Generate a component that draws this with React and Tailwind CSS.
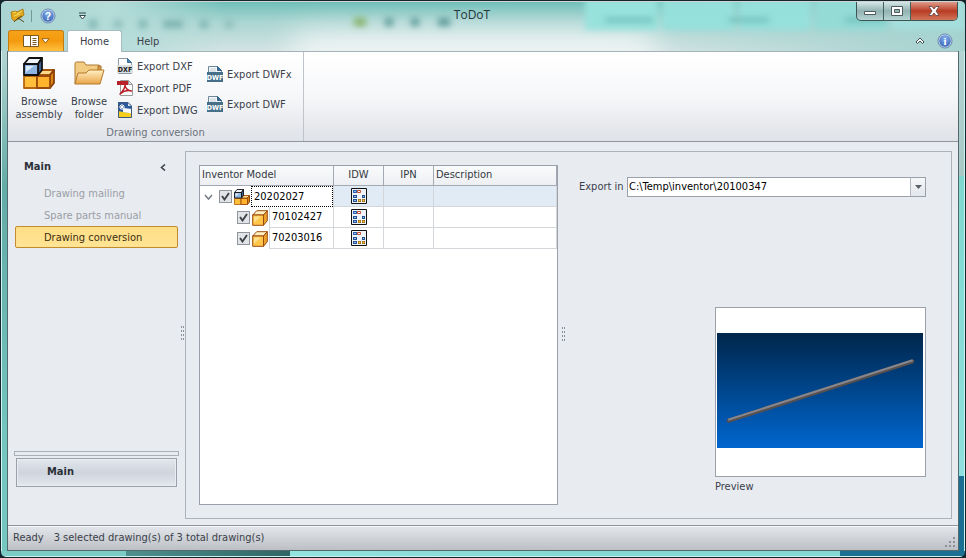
import React, { useState } from "react";

function Assembly({ className }) {
  return (
    <svg className={className} viewBox="0 0 32 32" aria-hidden="true">
      <g strokeLinejoin="round" strokeWidth="1.8">
        <path d="M14 18l4-5h13l-4 5z" fill="#ffd98a" stroke="#a8560c" />
        <path d="M27 18l4-5v13l-4 5z" fill="#d98512" stroke="#8a3d06" />
        <path d="M1 19h13v12H1z" fill="#ffbf3c" stroke="#b5650f" />
        <path d="M14 19h13v12H14z" fill="#ffb22c" stroke="#9a4a0a" />
        <path d="M1 7l5-6h13l-4 6z" fill="#eef3fa" stroke="#111" />
        <path d="M15 7l4-6v12l-4 5z" fill="#3c5f94" stroke="#111" />
        <path d="M1 7h14v11H1z" fill="#8fb6e2" stroke="#111" />
        <path d="M3 9h8l-8 6z" fill="#dcebfa" />
      </g>
    </svg>
  );
}

function Folder({ className }) {
  return (
    <svg className={className} viewBox="0 0 32 26" aria-hidden="true">
      <defs>
        <linearGradient id="folderFront" x1="0" y1="0" x2="0" y2="1">
          <stop offset="0" stopColor="#fff0c4" />
          <stop offset="1" stopColor="#e9a548" />
        </linearGradient>
      </defs>
      <path d="M2 24V3.500Q2 2 3.500 2H11l2 3h12.500Q27 5 27 6.500V14" fill="#f3cc83" stroke="#b07a34" />
      <path d="M25 6h3v6h-3z" fill="#d99c4c" stroke="#a96f2b" />
      <path d="M2 24L5 13h8l3-3h15l-4 14z" fill="url(#folderFront)" stroke="#b5792b" strokeLinejoin="round" />
    </svg>
  );
}

function DxfIcon() {
  return (
    <svg className="h-4 w-4 shrink-0" viewBox="0 0 16 16" aria-hidden="true">
      <path d="M1.500 .5h9l4 4v11h-13z" fill="#fdfdfd" stroke="#8c9aa8" />
      <path d="M10.500 .5l4 4h-4z" fill="#4c86bd" stroke="#3a6c9c" />
      <path d="M0 7h16v8H0z" fill="#dcdfe2" />
      <text x="8" y="14" textAnchor="middle" fontFamily="DejaVu Sans Condensed" fontSize="7" fontWeight="700" fill="#222">DXF</text>
    </svg>
  );
}

function DwfIcon() {
  return (
    <svg className="h-4 w-4 shrink-0" viewBox="0 0 16 16" aria-hidden="true">
      <path d="M1.500 .5h9l4 4v11h-13z" fill="#f4f7f9" stroke="#6c8798" />
      <path d="M10.500 .5l4 4h-4z" fill="#3d719b" stroke="#2f5f86" />
      <path d="M3 3h6M3 5h6" stroke="#c4d0d8" />
      <path d="M0 6h16v10H0z" fill="#466f8a" />
      <text x="8" y="14" textAnchor="middle" fontFamily="DejaVu Sans Condensed" fontSize="7" fontWeight="700" fill="#fff">DWF</text>
    </svg>
  );
}

function PdfIcon() {
  return (
    <svg className="h-4 w-4 shrink-0" viewBox="0 0 16 16" aria-hidden="true">
      <path d="M3.500 .5h8l4 4v11h-12z" fill="#fbfbfb" stroke="#9a9a9a" />
      <path d="M11.500 .5l4 4h-4z" fill="#e3e3e3" stroke="#9a9a9a" />
      <path d="M0 1h11v4H0z" fill="#b8202a" />
      <path d="M3 14c2-2 5-5 5-9 0 3 3 6 6.500 6-4-1-8 0-11.500 3z" fill="none" stroke="#b8202a" strokeWidth="1.500" strokeLinejoin="round" />
    </svg>
  );
}

function DwgIcon() {
  return (
    <svg className="h-4 w-4 shrink-0" viewBox="0 0 16 16" aria-hidden="true">
      <path d="M1 0h10l4 4v12H1z" fill="#2d5a9b" />
      <path d="M11 0l4 4h-4z" fill="#dce6f2" />
      <path d="M1 9l5 1 9 1v5H1z" fill="#f5ce1c" />
      <path d="M5 2v6M2 5h6M3 3l4 4M7 3L3 7" stroke="#fff" />
      <path d="M6 6l9 1v4.500L6 10z" fill="#f7f9fb" />
      <path d="M1.500 .5h9.500l3.500 3.500v11.500h-13z" fill="none" stroke="#3c5a80" />
    </svg>
  );
}

function PartIcon() {
  return (
    <svg className="h-4 w-4 shrink-0" viewBox="0 0 16 16" aria-hidden="true">
      <g stroke="#9c4a10" strokeLinejoin="round">
        <path d="M.7 5l4-4.300h10.600L11.500 5z" fill="#fff0c0" />
        <path d="M11.500 5l3.800-4.300v10l-3.800 4.600z" fill="#eba12b" />
        <path d="M.7 5h10.800v10.300H.7z" fill="#ffc64a" />
      </g>
      <path d="M2 6.500h7l-7 6z" fill="#ffe08e" />
    </svg>
  );
}

function DrawingIcon() {
  return (
    <svg className="mx-auto h-4 w-4" viewBox="0 0 16 16" role="img" aria-label="Drawing available">
      <path d="M.5 .5h15v15H.5z" fill="#eef3f9" stroke="#111" />
      <path d="M2 2h4v3H2z" fill="#2f62ad" />
      <path d="M3 3h2v1H3z" fill="#8dbbf2" />
      <path d="M6.500 2.500h3v2h-3z" fill="#fff" stroke="#c14b2a" />
      <path d="M2 7h4v3H2zM11 7h3v3h-3zM2 11h4v3H2z" fill="#24508f" />
      <path d="M3 8h2v1H3zM12 8h1v1h-1zM3 12h2v1H3z" fill="#8dbbf2" />
      <path d="M7 11h3v3H7zM11 11h3v3h-3z" fill="#77500d" />
      <path d="M7.500 11.500h2v2h-2zM11.500 11.500h2v2h-2z" fill="#ffc23a" />
    </svg>
  );
}

function HelpBall({ glyph }) {
  return (
    <svg className="h-4 w-4" viewBox="0 0 16 16" aria-hidden="true">
      <defs>
        <radialGradient id={"ball" + glyph} cx=".5" cy=".3" r=".7">
          <stop offset="0" stopColor="#86b2ee" />
          <stop offset="1" stopColor="#3562b2" />
        </radialGradient>
      </defs>
      <circle cx="8" cy="8" r="6.300" fill={"url(#ball" + glyph + ")"} stroke="#dce7f7" />
      <circle cx="8" cy="8" r="7" fill="none" stroke="#5875aa" strokeWidth=".8" />
      <text x="8" y="12" textAnchor="middle" fontSize="10.500" fontWeight="700" fontFamily={glyph === "i" ? "Liberation Serif" : "Liberation Sans"} fill="#fff">
        {glyph}
      </text>
    </svg>
  );
}

function Check({ label }) {
  const [on, setOn] = useState(true);
  return (
    <span className="grid h-[13px] w-[13px] shrink-0 place-items-center">
      <input
        type="checkbox"
        aria-label={label}
        checked={on}
        onChange={() => setOn(!on)}
        className="col-start-1 row-start-1 h-[13px] w-[13px] appearance-none border border-[#8e959d] bg-[#e2e4e8]"
      />
      {on && (
        <svg className="pointer-events-none col-start-1 row-start-1 h-[9px] w-[9px]" viewBox="0 0 9 9" aria-hidden="true">
          <path d="M1 4l2.500 3.500L8 1" fill="none" stroke="#3f4348" strokeWidth="1.900" />
        </svg>
      )}
    </span>
  );
}

function SmallCommand({ icon, children }) {
  return (
    <button type="button" className="flex h-[22px] items-center gap-1 whitespace-nowrap">
      {icon}
      <span className="pt-[2px]">{children}</span>
    </button>
  );
}

function Grip() {
  return (
    <svg className="h-4 w-[3px]" viewBox="0 0 3 16" aria-hidden="true">
      <path d="M0 1h1M2 1h1M0 5h1M2 5h1M0 9h1M2 9h1M0 13h1M2 13h1" stroke="#8b929b" strokeWidth="2" />
    </svg>
  );
}

function Backdrop() {
  return (
    <div className="pointer-events-none absolute inset-0 overflow-hidden" aria-hidden="true">
      <div className="absolute inset-0 bg-linear-to-b from-[#6fbfb8] via-[#a9d5d2] via-40% to-[#d3e4e3]" />
      <div className="absolute inset-y-0 left-0 w-56 bg-linear-to-r from-[#a9d4d1] via-[#b4dcd9] to-transparent" />
      <div className="absolute inset-y-0 right-0 w-80 bg-linear-to-r from-transparent to-[#a5d2cf]" />
      <div className="absolute -bottom-4 left-[30%] h-8 w-[38%] rounded-full bg-[#f6f9f9] blur-lg" />
      <div className="absolute -top-1 right-0 flex h-8 w-[380px] gap-1 blur-[3px]">
        <div className="flex-1 bg-[#98e2dc]" />
        <div className="flex-1 bg-[#96e0db]" />
        <div className="flex-1 bg-[#96e0db]" />
        <div className="flex-1 bg-[#94dbd6]" />
        <div className="flex-1 bg-[#a5dedb]" />
      </div>
      <div className="absolute right-20 top-4 flex w-[280px] justify-between blur-[3px]">
        <div className="h-1 w-12 bg-[#6cbab6]" />
        <div className="h-1 w-10 bg-[#6cbab6]" />
        <div className="h-1 w-10 bg-[#6cbab6]" />
      </div>
      <div className="absolute left-[88px] top-[18px] flex w-36 justify-between blur-[3px]">
        <div className="h-2 w-2 bg-[#7db4b0]" />
        <div className="h-2 w-2 bg-[#8bbdb9]" />
        <div className="h-2 w-2 bg-[#7db4b0]" />
        <div className="h-2 w-5 bg-[#7db4b0]" />
        <div className="h-2 w-2 bg-[#7db4b0]" />
        <div className="h-2 w-2 bg-[#8bbdb9]" />
      </div>
      <div className="absolute left-[353px] top-4 flex w-24 justify-between blur-[3px]">
        <div className="h-2 w-3 bg-[#86b268]" />
        <div className="h-2 w-2 bg-[#5c9b98]" />
        <div className="h-2 w-2 bg-[#5c9b98]" />
        <div className="h-2 w-3 bg-[#5c9b98]" />
      </div>
    </div>
  );
}

function TitleBar() {
  const control = "grid h-[18px] place-items-center border-r border-[#41605f]";
  return (
    <div className="relative flex h-7 items-start justify-between">
      <div className="flex h-7 items-center pl-2">
        <svg className="h-4 w-4" viewBox="0 0 16 16" aria-hidden="true">
          <path d="M1 4l5-1 1 1 6-3 1 6-5 4-5 2-2-2z" fill="#e0a81c" stroke="#a9750c" strokeWidth=".8" />
          <path d="M3 5l3-1M7 6l5-3M4 8l6-2" stroke="#f7dc62" />
          <path d="M4 14l4-4 3 2 3 2M8 10l4-2" fill="none" stroke="#5b4a23" />
        </svg>
        <span className="ml-[5px] h-3 w-px bg-[#6f9a97]" />
        <button type="button" aria-label="Help" className="ml-2">
          <HelpBall glyph="?" />
        </button>
        <button type="button" aria-label="Customize quick access toolbar" className="ml-[23px]">
          <svg className="h-2 w-[7px]" viewBox="0 0 7 8" aria-hidden="true">
            <path d="M0 1h7" stroke="#35474d" />
            <path d="M.5 3.500h6L3.500 7z" fill="#fff" stroke="#35474d" />
          </svg>
        </button>
      </div>
      <h1 className="absolute inset-x-0 top-[5px] pr-[22px] text-center font-['Open_Sans','Noto_Sans',sans-serif] text-xs leading-4 text-[#26363b]">ToDoT</h1>
      <div className="relative mr-[6px] flex overflow-hidden rounded-b-[5px] border border-t-0 border-[#3c5456] bg-linear-to-b from-[#d4e8e6] via-[#93b2b2] via-50% to-[#b6d6d4]">
        <button type="button" aria-label="Minimize" className={control + " w-[27px]"}>
          <svg className="h-[10px] w-3" viewBox="0 0 12 10" aria-hidden="true">
            <path d="M.5 5.500h11v3H.5z" fill="#fff" stroke="#4d5a60" />
          </svg>
        </button>
        <button type="button" aria-label="Maximize" className={control + " w-[27px]"}>
          <svg className="h-[10px] w-3" viewBox="0 0 12 10" aria-hidden="true">
            <path d="M.5 .5h11v9H.5zM3.500 3.500v3h5v-3z" fill="#fff" fillRule="evenodd" stroke="#4d5a60" />
          </svg>
        </button>
        <button type="button" aria-label="Close" className="grid h-[18px] w-[46px] place-items-center bg-linear-to-b from-[#dc9a8a] via-[#b93a22] via-50% to-[#d07559]">
          <svg className="h-[10px] w-3" viewBox="0 0 12 10" aria-hidden="true">
            <path d="M1 .5h3l2 2.500 2-2.500h3L8 5l3 4.500H8L6 7 4 9.500H1L4 5z" fill="#fff" stroke="#5c4144" strokeWidth=".8" />
          </svg>
        </button>
      </div>
    </div>
  );
}

function RibbonTabs() {
  return (
    <div className="relative flex h-[21px] items-stretch pl-[6px] pr-[6px]">
      <button
        type="button"
        aria-label="Application menu"
        className="flex w-14 items-center justify-center gap-[2px] rounded-t-[3px] border border-b-0 border-[#c27c12] bg-linear-to-b from-[#f6a21a] via-[#f49a0c] to-[#ffc03a]"
      >
        <svg className="h-3 w-4" viewBox="0 0 16 12" aria-hidden="true">
          <path d="M.5 .5h15v11H.5z" fill="#fff" stroke="#7b5a22" />
          <path d="M7.500 1v10" stroke="#7b5a22" />
          <path d="M9.500 3.500h4M9.500 5.500h4M9.500 7.500h4M9.500 9.500h4" stroke="#7b5a22" />
        </svg>
        <svg className="h-[6px] w-[9px]" viewBox="0 0 9 6" aria-hidden="true">
          <path d="M1 .7h7L4.500 5z" fill="#fff" stroke="#9b6412" />
        </svg>
      </button>
      <nav className="flex" aria-label="Ribbon tabs">
        <a href="#home" className="relative ml-[3px] -mb-px flex w-[55px] items-center justify-center rounded-t-[3px] border border-b-0 border-[#a9bcbf] bg-white pt-px">
          Home
        </a>
        <a href="#help" className="flex w-[52px] items-center justify-center pt-[3px]">
          Help
        </a>
      </nav>
      <div className="ml-auto flex items-center gap-3 pr-[5px]">
        <button type="button" aria-label="Collapse ribbon">
          <svg className="h-2 w-[10px]" viewBox="0 0 10 8" aria-hidden="true">
            <path d="M1 5l4-4 4 4-1.500 1.500L5 4 2.500 6.500z" fill="#fff" stroke="#3d4a50" />
          </svg>
        </button>
        <button type="button" aria-label="About">
          <HelpBall glyph="i" />
        </button>
      </div>
    </div>
  );
}

function Ribbon() {
  return (
    <div className="flex border-b border-t border-b-[#8f969e] border-t-[#a4b3b9] bg-linear-to-b from-white via-[#f6f7f9] to-[#dfe2e7]">
      <section className="flex h-[89px] w-[296px] flex-col border-r border-[#bfc4cb]">
        <div className="flex h-[73px] pl-[6px] pt-[3px]">
          <button type="button" className="flex w-[50px] flex-col items-center leading-[13px]">
            <span className="grid h-9 place-items-center">
              <Assembly className="h-8 w-8" />
            </span>
            <span className="mt-1">Browse assembly</span>
          </button>
          <button type="button" className="flex w-[50px] flex-col items-center leading-[13px]">
            <span className="grid h-9 place-items-center">
              <Folder className="h-[26px] w-8" />
            </span>
            <span className="mt-1">Browse folder</span>
          </button>
          <div className="flex w-[90px] flex-col pl-[3px]">
            <SmallCommand icon={<DxfIcon />}>Export DXF</SmallCommand>
            <SmallCommand icon={<PdfIcon />}>Export PDF</SmallCommand>
            <SmallCommand icon={<DwgIcon />}>Export DWG</SmallCommand>
          </div>
          <div className="flex flex-col gap-2 pl-[3px] pt-2">
            <SmallCommand icon={<DwfIcon />}>Export DWFx</SmallCommand>
            <SmallCommand icon={<DwfIcon />}>Export DWF</SmallCommand>
          </div>
        </div>
        <h2 className="text-center leading-4 text-[#6b727c]">Drawing conversion</h2>
      </section>
    </div>
  );
}

function Sidebar() {
  const item = "flex h-[22px] w-full items-center rounded-[2px] border pl-[28px] pt-[2px]";
  return (
    <aside className="flex w-[172px] shrink-0 flex-col pl-[6px]">
      <div className="mt-4 flex h-[18px] items-center justify-between pl-[10px] pr-[14px]">
        <h2 className="text-[11px] font-bold text-[#2b3038]">Main</h2>
        <button type="button" aria-label="Collapse navigation">
          <svg className="h-[7px] w-[6px]" viewBox="0 0 6 7" aria-hidden="true">
            <path d="M5 .5l-3.500 3 3.500 3" fill="none" stroke="#3d434b" strokeWidth="1.600" />
          </svg>
        </button>
      </div>
      <nav className="mt-[6px] w-[164px] pl-px" aria-label="Main">
        <button type="button" disabled className={item + " border-transparent text-[#9a9ea5]"}>
          Drawing mailing
        </button>
        <button type="button" disabled className={item + " border-transparent text-[#9a9ea5]"}>
          Spare parts manual
        </button>
        <button type="button" className={item + " border-[#c48a2c] bg-linear-to-b from-[#ffdf86] to-[#ffe494] text-[#3b2d12]"}>
          Drawing conversion
        </button>
      </nav>
      <div className="mt-auto h-[5px] w-[165px] border border-[#a9afb8]" />
      <button
        type="button"
        className="mb-[38px] ml-[2px] mt-[2px] flex h-[29px] w-[161px] items-center border border-[#9aa1ab] bg-linear-to-b from-[#e3e7ed] via-[#cfd5de] to-[#e3e7ed] pl-[30px] text-[11px] font-bold text-[#2b3038] shadow-[inset_0_0_0_1px_#e9ecf1]"
      >
        Main
      </button>
    </aside>
  );
}

const rows = [
  { name: "20202027", root: true },
  { name: "70102427", root: false },
  { name: "70203016", root: false },
];

function ModelTable() {
  const head = "border-b border-r border-[#a3aab3] px-[2px] font-normal";
  return (
    <div className="w-[359px] shrink-0 border border-[#9aa1aa] bg-white">
      <table className="w-full table-fixed border-separate border-spacing-0">
        <colgroup>
          <col className="w-[134px]" />
          <col className="w-[50px]" />
          <col className="w-[50px]" />
          <col />
        </colgroup>
        <thead>
          <tr className="h-5 bg-linear-to-b from-[#fafbfc] to-[#eceef2] text-[#333942]">
            <th className={head + " text-left"}>Inventor Model</th>
            <th className={head + " text-center"}>IDW</th>
            <th className={head + " text-center"}>IPN</th>
            <th className={head + " text-left"}>Description</th>
          </tr>
        </thead>
        <tbody>
          {rows.map((row) => {
            const cell = "border-b border-r border-[#d3d6da] p-0" + (row.root ? " bg-[#e1ebf6]" : "");
            return (
              <tr key={row.name} className="h-[21px] text-black">
                <td className="border-r border-[#d3d6da] p-0">
                  <div className={"flex h-[21px] items-center " + (row.root ? "pl-1" : "pl-[37px]")}>
                    {row.root && (
                      <button type="button" aria-label="Collapse row" className="mr-[6px]">
                        <svg className="h-2 w-[9px]" viewBox="0 0 9 8" aria-hidden="true">
                          <path d="M1 2l3.500 4L8 2" fill="none" stroke="#777d85" strokeWidth="1.500" />
                        </svg>
                      </button>
                    )}
                    <Check label={"Select " + row.name} />
                    <span className="ml-[2px]">{row.root ? <Assembly className="h-4 w-4" /> : <PartIcon />}</span>
                    <span
                      className={
                        "ml-px flex flex-1 items-center self-stretch pl-[2px] pt-px " +
                        (row.root ? "border border-dotted border-black" : "border-b border-l border-[#d3d6da]")
                      }
                    >
                      {row.name}
                    </span>
                  </div>
                </td>
                <td className={cell}>
                  <DrawingIcon />
                </td>
                <td className={cell} />
                <td className={cell} />
              </tr>
            );
          })}
        </tbody>
      </table>
    </div>
  );
}

function Details() {
  return (
    <div className="flex flex-1 flex-col justify-between pb-[23px] pl-3 pr-[25px] pt-[25px]">
      <div className="flex items-center gap-1">
        <label htmlFor="export-path" className="w-11 shrink-0 whitespace-nowrap">
          Export in
        </label>
        <div className="grid h-5 flex-1 grid-cols-[1fr_15px] border border-[#9aa1aa] bg-white">
          <select id="export-path" className="col-span-2 col-start-1 row-start-1 appearance-none bg-transparent px-px text-black">
            <option>C:\Temp\inventor\20100347</option>
          </select>
          <span className="pointer-events-none col-start-2 row-start-1 grid place-items-center border-l border-[#b4b9c1] bg-linear-to-b from-[#f6f7f9] to-[#e3e6eb]">
            <svg className="h-1 w-[7px]" viewBox="0 0 7 4" aria-hidden="true">
              <path d="M0 0h7L3.500 4z" fill="#596069" />
            </svg>
          </span>
        </div>
      </div>
      <figure className="w-[211px] self-end">
        <div className="h-[170px] border border-[#9aa1aa] bg-white px-px pt-[25px]">
          <svg className="h-[115px] w-[206px]" viewBox="0 0 206 115" role="img" aria-label="Part preview">
            <defs>
              <linearGradient id="sky" x1="0" y1="0" x2="0" y2="1">
                <stop offset="0" stopColor="#00264b" />
                <stop offset="1" stopColor="#0066cf" />
              </linearGradient>
            </defs>
            <path d="M0 0h206v115H0z" fill="url(#sky)" />
            <path d="M12 87.500L195 28.500" stroke="#57504f" strokeWidth="4.400" strokeLinecap="round" />
            <path d="M12 86.500L195 27.500" stroke="#85868e" strokeWidth="2" strokeLinecap="round" />
          </svg>
        </div>
        <figcaption className="pt-[2px] leading-4">Preview</figcaption>
      </figure>
    </div>
  );
}

export default function App() {
  return (
    <div className="min-h-screen bg-[#14262c] font-['DejaVu_Sans_Condensed','Noto_Sans',sans-serif] text-[11px] text-[#3a414b]">
      <div className="flex min-h-screen flex-col overflow-hidden rounded-[6px] border border-[#14262c]">
        <header className="relative border-t border-white/80">
          <Backdrop />
          <div className="relative px-px">
            <TitleBar />
            <RibbonTabs />
          </div>
        </header>
        <div className="flex flex-1">
          <div className="w-[6px] shrink-0 border-l border-[#d5f3f0] bg-linear-to-b from-[#b4d6d3] from-0% via-[#63aba6] via-27% to-[#74c6c0] to-80%" />
          <main className="flex min-w-0 flex-1 flex-col border-x border-b border-[#52696f] bg-[#e8ebf0]">
            <Ribbon />
            <div className="flex flex-1">
              <Sidebar />
              <div className="grid w-[5px] place-items-center">
                <Grip />
              </div>
              <section className="mb-[6px] mr-[6px] mt-[9px] flex min-w-0 flex-1 border border-[#acb2ba] pl-[13px]">
                <div className="flex pb-[13px] pt-[13px]">
                  <ModelTable />
                </div>
                <div className="grid w-[9px] place-items-center pl-[2px]">
                  <Grip />
                </div>
                <Details />
              </section>
            </div>
            <footer className="flex h-[25px] items-center justify-between border-t border-[#8f969e] bg-linear-to-b from-[#e4e7eb] to-[#bcbfc4] pl-[5px] pr-[3px] shadow-[inset_0_1px_0_#f6f7f9]">
              <p className="flex gap-[10px] pt-px">
                <span>Ready</span>
                <span>3 selected drawing(s) of 3 total drawing(s)</span>
              </p>
              <svg className="mt-2 h-[10px] w-[10px]" viewBox="0 0 10 10" aria-hidden="true">
                <path d="M8 1h2M4 5h2M8 5h2M0 9h2M4 9h2M8 9h2" stroke="#8b9098" strokeWidth="2" />
              </svg>
            </footer>
          </main>
          <div className="flex w-[6px] shrink-0 flex-col border-r border-[#c9f3ef]">
            <div className="h-1/4 bg-linear-to-b from-[#b3d4d2] to-[#a8c9c6]" />
            <div className="h-3/5 bg-linear-to-b from-[#7fd8d0] to-[#8fe0de]" />
            <div className="flex-1 bg-[#1a6f92]" />
          </div>
        </div>
        <div className="flex h-[6px] border-b border-[#c9f3ef]">
          <div className="w-[13%] bg-[#7dcbc5]" />
          <div className="w-[17%] bg-linear-to-r from-[#4f908e] to-[#2f6665]" />
          <div className="w-[57%] bg-linear-to-r from-[#93e3e0] via-[#86d8d5] to-[#86d8d5]" />
          <div className="flex-1 bg-[#1a6f92]" />
        </div>
      </div>
    </div>
  );
}
